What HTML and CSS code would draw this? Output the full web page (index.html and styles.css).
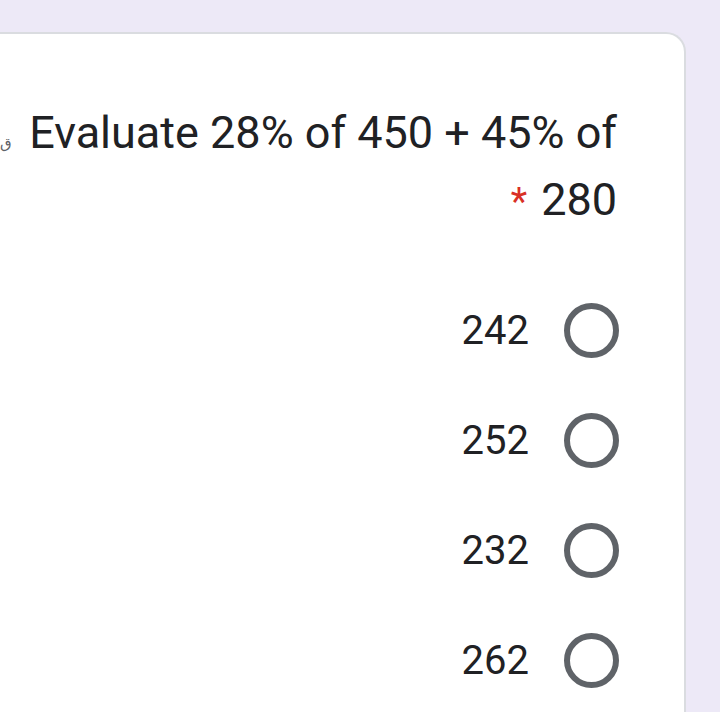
FILE: index.html
```html
<!DOCTYPE html>
<html lang="en">
<head>
<meta charset="utf-8">
<link rel="stylesheet" href="styles.css">
</head>
<body>
<div class="card">
  <div class="title">
    <div class="line line1"><span class="frag">ق</span><span class="q">Evaluate 28% of 450 + 45% of</span></div>
    <div class="line line2"><span class="req">*</span><span class="q">280</span></div>
  </div>
  <div class="options">
    <div class="opt"><span class="label">242</span><span class="radio"></span></div>
    <div class="opt"><span class="label">252</span><span class="radio"></span></div>
    <div class="opt"><span class="label">232</span><span class="radio"></span></div>
    <div class="opt"><span class="label">262</span><span class="radio"></span></div>
  </div>
</div>
</body>
</html>
```
FILE: styles.css
```css
html, body {
  margin: 0;
  padding: 0;
  height: 100%;
  overflow: hidden;
}
body {
  background: #ede9f7;
  font-family: Roboto, "Noto Sans", Arial, sans-serif;
  color: #202124;
}
.card {
  box-sizing: border-box;
  margin: 32px 34px 0 -40px;
  height: calc(100% - 32px);
  background: #ffffff;
  border: 2px solid #dadce0;
  border-bottom: none;
  border-radius: 20px 20px 0 0;
  padding: 0 67px 0 0;
}
.title {
  padding-top: 76px;
}
.line {
  display: flex;
  justify-content: flex-end;
  align-items: baseline;
}
.q {
  font-size: 45px;
  line-height: 67px;
}
.line1 {
  height: 67px;
  margin-top: -11px;
}
.frag {
  font-size: 15px;
  color: #5f6368;
  margin-right: 17px;
}
.req {
  color: #d93025;
  font-size: 38px;
  margin-right: 14px;
}
.options {
  padding-top: 42px;
}
.opt {
  display: flex;
  justify-content: flex-end;
  align-items: center;
  height: 110px;
  gap: 35px;
  margin-right: -2px;
}
.label {
  font-size: 40px;
}
.radio {
  width: 43px;
  height: 43px;
  border: 6px solid #5f6368;
  border-radius: 50%;
  flex: none;
}
```
